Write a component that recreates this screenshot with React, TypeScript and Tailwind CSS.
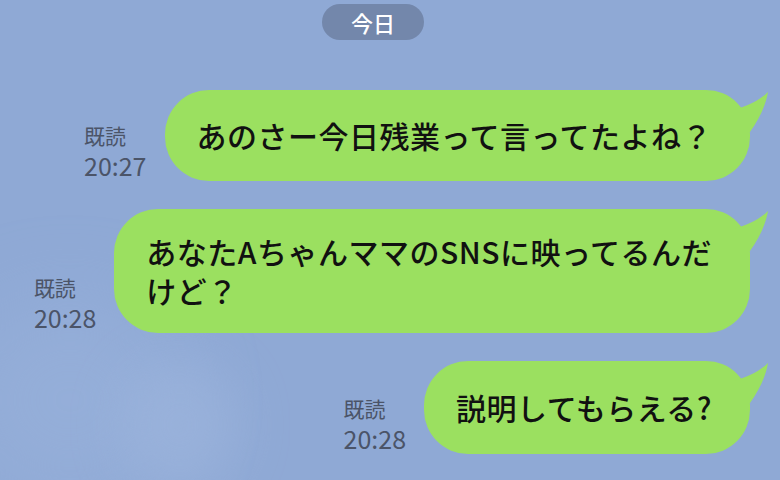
import React from "react";

type Msg = {
  lines: string[];
  time: string;
  py: string;
};

const messages: Msg[] = [
  { lines: ["あのさー今日残業って言ってたよね？"], time: "20:27", py: "py-[26px]" },
  { lines: ["あなたAちゃんママのSNSに映ってるんだ", "けど？"], time: "20:28", py: "py-[23px]" },
  { lines: ["説明してもらえる?"], time: "20:28", py: "py-[27px]" },
];

function Tail() {
  return (
    <svg
      className="absolute top-0 -right-[20px] w-[36px] h-[44px]"
      viewBox="0 0 36 44"
    >
      <path d="M0 20 C 14 16 26 10 34 2 C 32 14 26 28 16 42 L 0 42 Z" fill="#9be060" />
    </svg>
  );
}

function Bubble({ msg }: { msg: Msg }) {
  return (
    <div className="flex items-end justify-end gap-[18px] pr-[30px]">
      <div className="flex flex-col text-[#4b5468]">
        <span className="text-[21px] leading-[30px]">既読</span>
        <span className="text-[25px] leading-[31px]">{msg.time}</span>
      </div>
      <div
        className={`relative bg-[#9be060] rounded-[44px] pl-8 pr-[38px] ${msg.py} text-[30px] leading-[39px] tracking-[0.5px] text-[#111] font-medium whitespace-nowrap`}
      >
        <Tail />
        <div className="relative">
          {msg.lines.map((l, i) => (
            <div key={i}>{l}</div>
          ))}
        </div>
      </div>
    </div>
  );
}

export default function App() {
  return (
    <div
      className="relative w-[780px] h-[480px] overflow-hidden bg-[#8fa9d5]"
      style={{ fontFamily: '"Noto Sans CJK JP", "Noto Sans", sans-serif' }}
    >
      {/* faint clouds */}
      <div className="absolute left-[-40px] top-[300px] w-[220px] h-[200px] rounded-full bg-[#9ab3dc] opacity-50 blur-2xl" />
      <div className="absolute left-[120px] top-[360px] w-[120px] h-[130px] rounded-full bg-[#9db5dd] opacity-60 blur-xl" />

      <div className="relative flex flex-col">
        <div className="pt-1 pl-[322px]">
          <div className="w-[102px] h-9 rounded-full bg-[#7387ab] flex items-center justify-center text-white text-[22px] font-medium">
            今日
          </div>
        </div>
        <div className="flex flex-col gap-[28px] mt-[50px]">
          {messages.map((m, i) => (
            <Bubble key={i} msg={m} />
          ))}
        </div>
      </div>
    </div>
  );
}
